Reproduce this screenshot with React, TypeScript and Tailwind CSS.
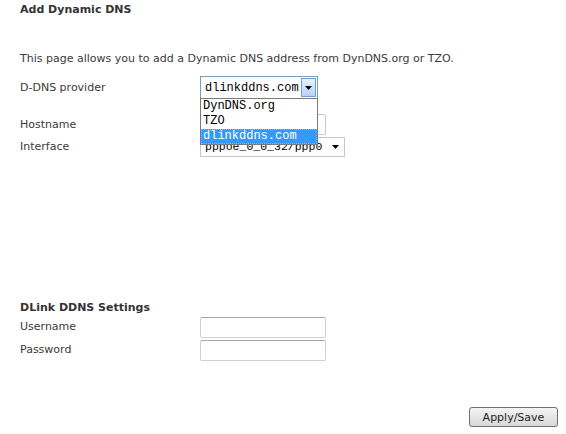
import React from 'react';

const label = 'w-[180px] shrink-0';

const App: React.FC = () => {
  return (
    <div className="relative w-[566px] h-[434px] bg-white pl-5 pr-2 text-[11px] leading-[14px] text-[#3a3a3a] font-['DejaVu_Sans',sans-serif]">
      {/* Header */}
      <div className="pt-[3px] font-bold text-[#333]">Add Dynamic DNS</div>
      <p className="mt-[35px]">This page allows you to add a Dynamic DNS address from DynDNS.org or TZO.</p>

      {/* Provider row with open dropdown */}
      <div className="mt-[10px] flex items-center h-[23px]">
        <div className={label}>D-DNS provider</div>
        <div className="relative">
          <div className="flex items-stretch w-[118px] h-[23px] border border-[#7f9db9] bg-white">
            <div className="flex-1 pl-1 flex items-center font-['Liberation_Mono',monospace] text-[12px] text-black">dlinkddns.com</div>
            <div className="w-[15px] my-[1px] mr-[1px] flex items-center justify-center border border-[#6f9fd8] bg-gradient-to-b from-[#e6f1fd] to-[#b7d3f3]">
              <svg width="7" height="4" viewBox="0 0 7 4"><path d="M0 0h7L3.5 4z" fill="#000" /></svg>
            </div>
          </div>
          {/* Open list */}
          <div className="absolute left-0 top-[22px] z-10 w-[118px] border border-[#7a7a7a] bg-white font-['Liberation_Mono',monospace] text-[12px] leading-[15px] text-black">
            <div className="px-[2px]">DynDNS.org</div>
            <div className="px-[2px]">TZO</div>
            <div className="px-[2px] bg-[#3399ff] text-white outline outline-1 outline-dotted outline-[#e8a050] -outline-offset-1">dlinkddns.com</div>
          </div>
        </div>
      </div>

      <div className="mt-[15px] flex items-center h-[21px]">
        <div className={label}>Hostname</div>
        <div className="w-[126px] h-[21px] border border-[#c8c8c8] rounded-[2px] bg-white" />
      </div>
      <div className="mt-[1px] flex items-center h-[22px]">
        <div className={label}>Interface</div>
        <div className="w-[145px] h-[20px] border border-[#c8c8c8] flex items-center justify-between pl-1 pr-[5px] font-['Liberation_Mono',monospace] text-[11.5px] text-black">
          <span>pppoe_0_0_32/ppp0</span>
          <svg width="7" height="4" viewBox="0 0 7 4"><path d="M0 0h7L3.5 4z" fill="#000" /></svg>
        </div>
      </div>

      {/* DLink settings */}
      <div className="mt-[143px] font-bold text-[#333]">DLink DDNS Settings</div>
      <div className="mt-[1px] flex items-center h-[22px]">
        <div className={label}>Username</div>
        <div className="w-[126px] h-[21px] border border-[#d0d0d0] border-t-[#a8a8a8] rounded-[2px] bg-white" />
      </div>
      <div className="mt-[1px] flex items-center h-[22px]">
        <div className={label}>Password</div>
        <div className="w-[126px] h-[21px] border border-[#d0d0d0] border-t-[#a8a8a8] rounded-[2px] bg-white" />
      </div>

      <div className="mt-[46px] flex justify-end">
        <button className="w-[89px] h-[20px] border border-[#707070] rounded-[3px] bg-gradient-to-b from-[#f4f4f4] to-[#d8d8d8] text-[11px] text-[#222] leading-none">Apply/Save</button>
      </div>
    </div>
  );
};

export default App;
